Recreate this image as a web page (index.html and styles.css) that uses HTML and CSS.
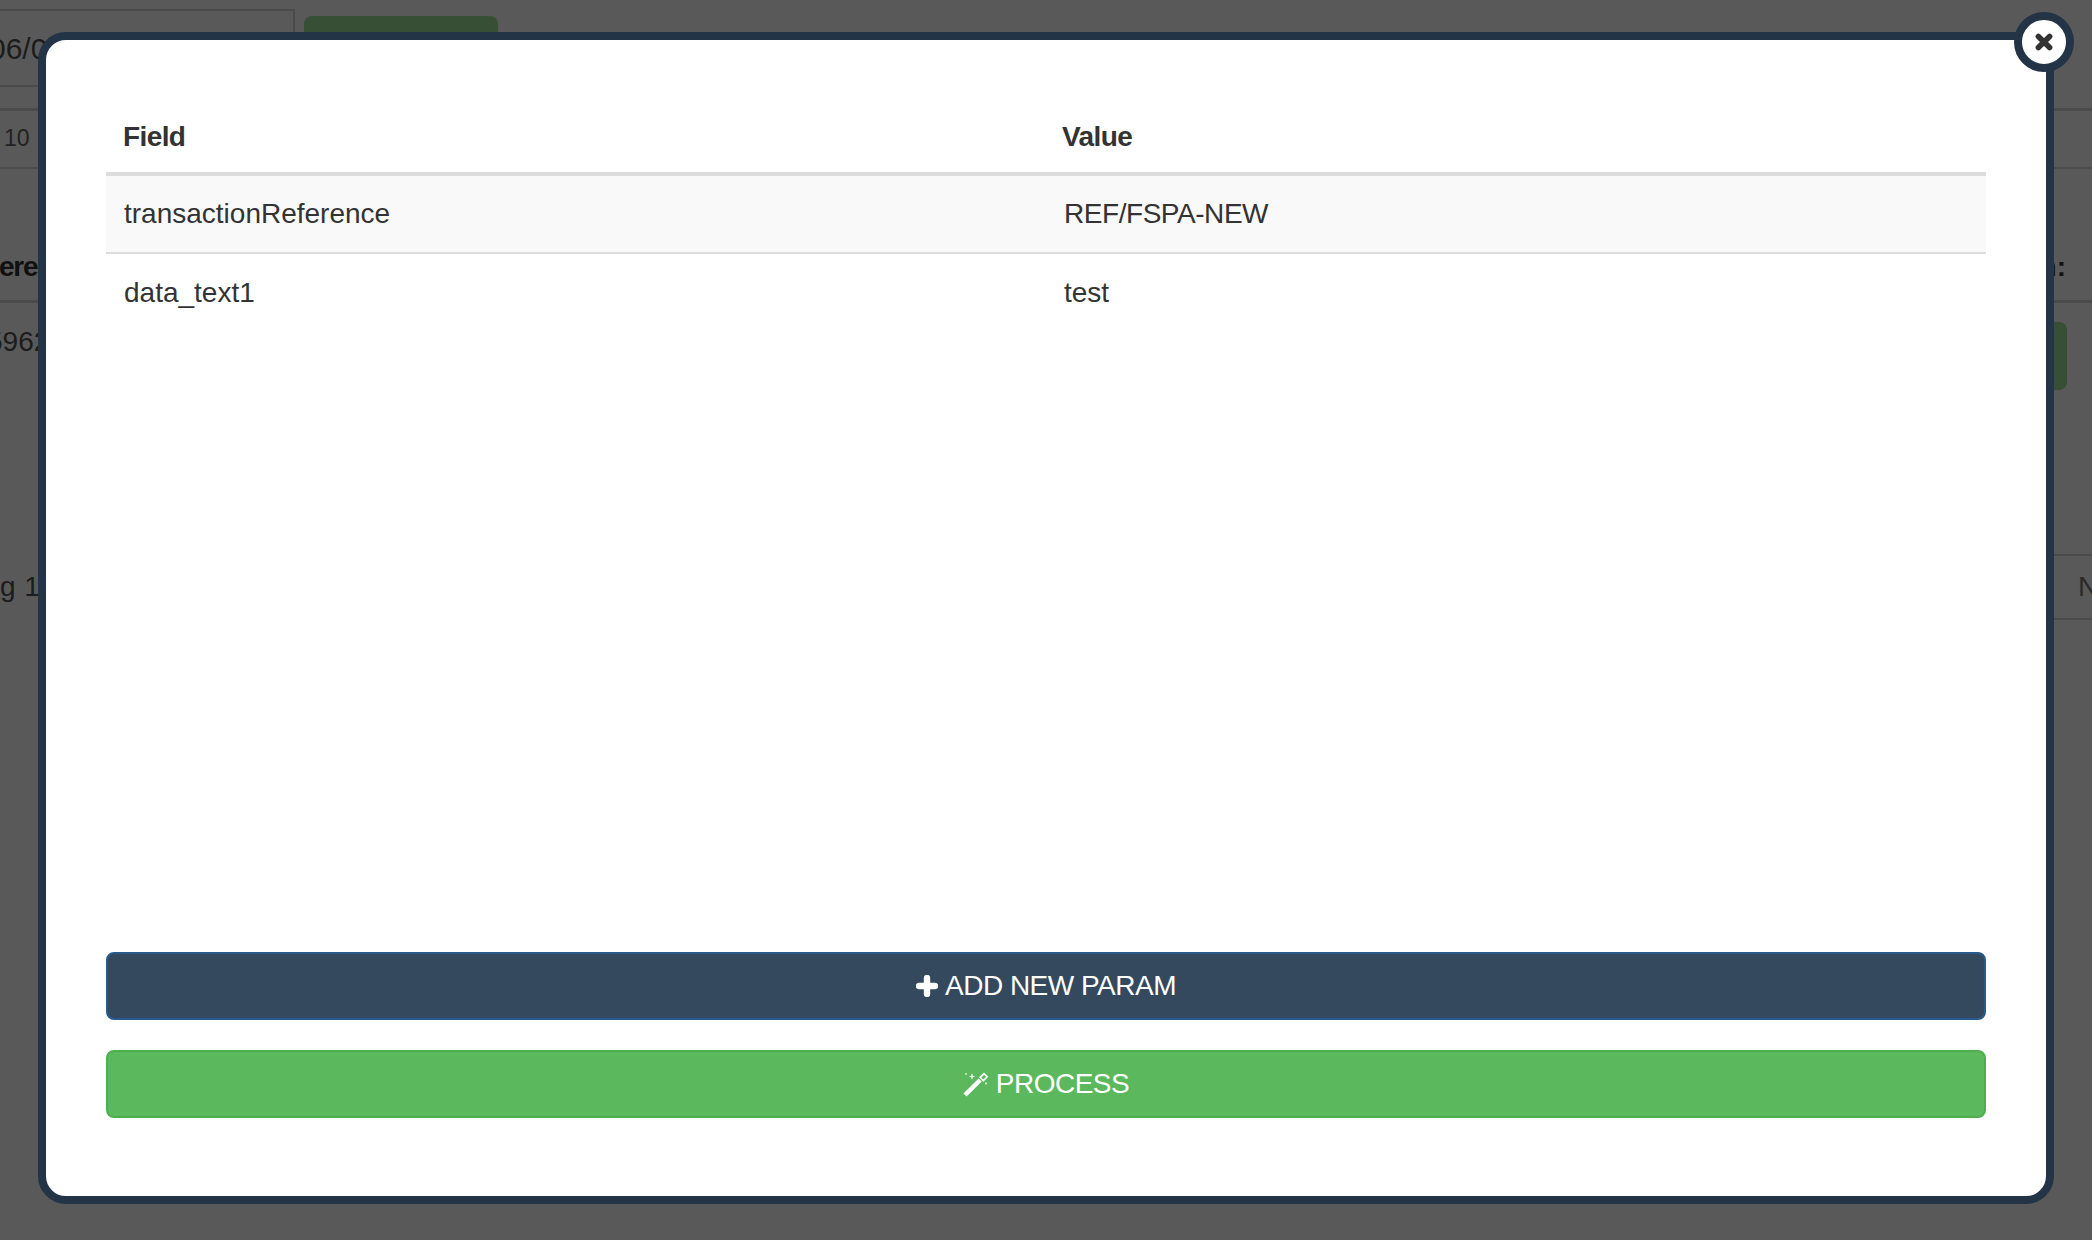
FILE: index.html
```html
<!DOCTYPE html>
<html lang="en">
<head>
<meta charset="utf-8">
<title>Params</title>
<link rel="stylesheet" href="styles.css">
</head>
<body>
<div class="page">
  <div class="top-row">
    <div class="date-input">06/0</div>
    <div class="go-btn"></div>
  </div>
  <div class="pager-row"><span class="pager-num">10</span></div>
  <div class="head-row"><span>eren</span><span class="head-end">n:</span></div>
  <div class="data-row"><span class="data-num">5962</span><div class="row-btn"></div></div>
  <div class="last-row"><span class="last-text">g 1</span><div class="last-cell">N</div></div>
</div>

<div class="modal">
  <button class="close" type="button" aria-label="Close">
    <svg class="close-icon" viewBox="0 0 18 18"><path d="M3.4 3.4 14.6 14.6M14.6 3.4 3.4 14.6"/></svg>
  </button>
  <table class="params">
    <thead>
      <tr><th>Field</th><th>Value</th></tr>
    </thead>
    <tbody>
      <tr class="odd"><td>transactionReference</td><td class="tight">REF/FSPA-NEW</td></tr>
      <tr><td>data_text1</td><td>test</td></tr>
    </tbody>
  </table>
  <div class="actions">
    <button class="btn btn-navy" type="button">
      <svg class="icon-plus" viewBox="0 0 22 22"><path d="M11 3v16M3 11h16"/></svg>
      <span>ADD NEW PARAM</span>
    </button>
    <button class="btn btn-green" type="button">
      <svg class="icon-wand" viewBox="0 0 26 25">
        <path class="wand-fill" d="M.4 21.4 15.6 6.4 18.8 9.6 3.6 24.6Z"/>
        <path class="wand-tip" d="M17.2 5.4 21 1.6 24.2 4.8 20.4 8.6Z"/>
        <path class="wand-spark" d="M9 2v5M6.5 4.5h5M3 1.2v1.6M2.2 2h1.6M23 10.6v1.8M22.1 11.5h1.8"/>
      </svg>
      <span>PROCESS</span>
    </button>
  </div>
</div>
</body>
</html>
```

FILE: styles.css
```css
* { box-sizing: border-box; }

html, body {
  margin: 0;
  height: 100%;
  overflow: hidden;
  background: #595959;
  font-family: "Liberation Sans", Arial, sans-serif;
}

/* dimmed page behind the dialog */
.page {
  height: 100vh;
  overflow: hidden;
  color: #1c1c1c;
  font-size: 28px;
}

.top-row {
  height: 108px;
  padding-top: 9px;
  display: flex;
  align-items: flex-start;
  gap: 9px;
}

.date-input {
  width: 295px;
  height: 78px;
  padding-top: 2px;
  border: 2px solid #4b4b4b;
  border-left: 0;
  display: flex;
  align-items: center;
  font-size: 30px;
  text-indent: -11px;
}

.go-btn {
  width: 194px;
  height: 60px;
  margin-top: 7px;
  background: #364f35;
  border-radius: 8px;
}

.pager-row {
  height: 61px;
  border-top: 3px solid #4b4b4b;
  border-bottom: 2px solid #4b4b4b;
  display: flex;
  align-items: center;
  padding: 0 0 2px 4px;
}

.pager-num { font-size: 23px; color: #222; }

.head-row {
  height: 134px;
  border-bottom: 3px solid #4b4b4b;
  display: flex;
  justify-content: space-between;
  align-items: flex-start;
  padding: 82px 26px 0 0;
  font-weight: bold;
  color: #111;
}

.head-row > span:first-child { margin-left: -1px; letter-spacing: -1.2px; }

.data-row {
  height: 251px;
  display: flex;
  justify-content: space-between;
  align-items: flex-start;
  padding: 19px 25px 0 0;
}

.data-num { margin: 4px 0 0 -13px; }

.row-btn {
  width: 120px;
  height: 68px;
  background: #364f35;
  border-radius: 8px;
}

.last-row {
  display: flex;
  justify-content: space-between;
  align-items: center;
  height: 66px;
}

.last-text { letter-spacing: 0.4px; }

.last-cell {
  width: 92px;
  height: 66px;
  padding-left: 78px;
  border-top: 2px solid #4b4b4b;
  border-bottom: 2px solid #4b4b4b;
  display: flex;
  align-items: center;
  white-space: nowrap;
  color: #2a2a2a;
}

/* dialog */
.modal {
  position: fixed;
  left: 38px;
  top: 32px;
  width: 2016px;
  height: 1172px;
  padding: 56px 60px 78px;
  background: #fff;
  border: 8px solid #233446;
  border-radius: 28px;
  display: flex;
  flex-direction: column;
  color: #333;
  font-size: 28px;
}

.close {
  position: absolute;
  top: -28px;
  right: -28px;
  width: 60px;
  height: 60px;
  padding: 0;
  border: 8px solid #233446;
  border-radius: 50%;
  background: #fff;
  display: flex;
  align-items: center;
  justify-content: center;
}

.close-icon { width: 18px; height: 18px; }
.close-icon path { fill: none; stroke: #333; stroke-width: 5.6; stroke-linecap: round; }

.params {
  width: 100%;
  border-collapse: collapse;
  table-layout: fixed;
}

.params th, .params td {
  text-align: left;
  font-size: 28px;
}

.params th {
  height: 78px;
  padding: 6px 17px 0;
  font-weight: bold;
  letter-spacing: -0.6px;
  border-bottom: 4px solid #ddd;
}

.params th + th { padding-left: 16px; }

.params td {
  height: 78px;
  padding: 0 18px;
}

.params .tight { letter-spacing: -0.45px; }

.params .odd td {
  height: 79px;
  background: #f9f9f9;
  border-bottom: 2px solid #ddd;
}

.actions {
  margin-top: auto;
  display: flex;
  flex-direction: column;
  gap: 30px;
}

.btn {
  height: 68px;
  width: 100%;
  padding: 0;
  border-radius: 8px;
  border: 2px solid;
  color: #fff;
  font-family: inherit;
  font-size: 28px;
  letter-spacing: -0.5px;
  display: flex;
  align-items: center;
  justify-content: center;
  gap: 7px;
}

.btn-navy { background: #34495e; border-color: #285a8c; }
.btn-green { background: #5cb85c; border-color: #4cae4c; }

.icon-plus { width: 22px; height: 22px; }
.icon-plus path { fill: none; stroke: #fff; stroke-width: 6.4; stroke-linecap: round; }

.icon-wand { width: 26px; height: 25px; }
.wand-fill { fill: #fff; }
.wand-tip { fill: none; stroke: #fff; stroke-width: 1.6; }
.wand-spark { fill: none; stroke: #fff; stroke-width: 1.2; }
```
